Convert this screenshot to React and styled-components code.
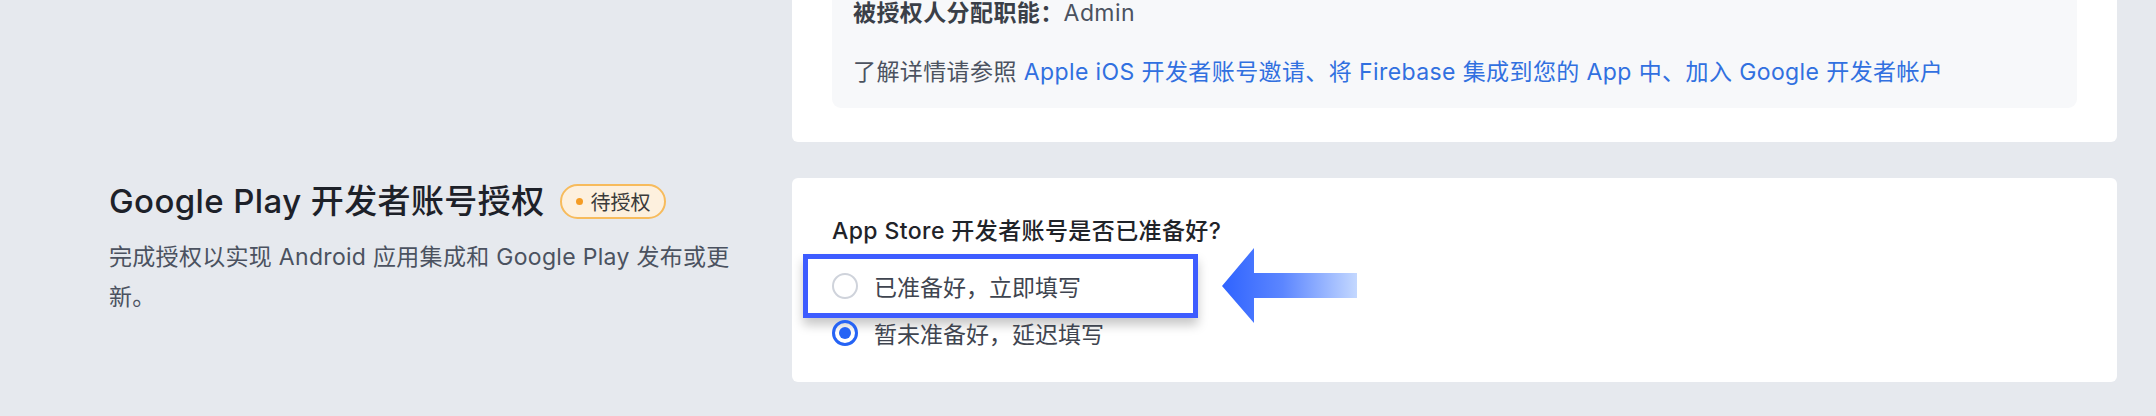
import React from "react";
import styled, { createGlobalStyle } from "styled-components";

const GlobalStyle = createGlobalStyle`
  html, body {
    margin: 0;
    padding: 0;
    background: #e6e9ee;
    overflow: hidden;
  }
  body {
    font-family: Inter, "Noto Sans CJK SC", "Noto Sans", sans-serif;
    -webkit-font-smoothing: antialiased;
  }
`;

const Page = styled.div`
  width: 2156px;
  height: 416px;
  box-sizing: border-box;
  padding: 0 39px 0 109px;
  overflow: hidden;
`;

/* the view is scrolled: the first card starts above the top edge */
const Scrolled = styled.div`
  margin-top: -29px;
`;

const Row = styled.section`
  display: flex;
  align-items: flex-start;
  margin-top: ${(p) => p.$gap || 0}px;
`;

const Side = styled.div`
  width: 683px;
  flex-shrink: 0;
`;

const SideInner = styled.div`
  width: 636px;
`;

const TitleLine = styled.div`
  display: flex;
  align-items: center;
  gap: 15px;
  height: 46px;
`;

const Title = styled.h2`
  margin: 0;
  font-size: 33px;
  font-weight: 500;
  color: #1d2129;
  line-height: 46px;
  letter-spacing: 0.4px;
`;

const Badge = styled.span`
  display: inline-flex;
  align-items: center;
  gap: 8px;
  height: 35px;
  box-sizing: border-box;
  padding: 0 13px 0 14px;
  border: 2px solid #f7bb5c;
  border-radius: 18px;
  background: #fdf0de;
  font-size: 20px;
  color: #3a3a3a;
  &::before {
    content: "";
    width: 7px;
    height: 7px;
    border-radius: 50%;
    background: #f59c24;
  }
`;

const Desc = styled.p`
  margin: 13px 0 0;
  font-size: 23px;
  line-height: 40px;
  letter-spacing: 0.3px;
  color: #4b5260;
`;

const Card = styled.div`
  flex: 1;
  background: #fff;
  border-radius: ${(p) => (p.$flatTop ? "0 0 6px 6px" : "6px")};
  padding: ${(p) => p.$pad};
  box-sizing: border-box;
`;

const InfoBox = styled.div`
  background: #f7f8fa;
  border-radius: 0 0 9px 9px;
  padding: 22px 21px 16px;
  font-size: 23px;
  line-height: 40px;
  letter-spacing: 0.4px;
  color: #4b5260;
`;

const InfoLine = styled.div`
  margin-top: ${(p) => p.$mt || 0}px;
`;

const Label = styled.span`
  font-weight: 600;
  color: #3a3f48;
`;

const Link = styled.a`
  color: #3170e0;
  text-decoration: none;
`;

const Question = styled.div`
  font-size: 23px;
  line-height: 36px;
  font-weight: 500;
  letter-spacing: 0.4px;
  color: #1f2329;
`;

const Options = styled.div`
  display: flex;
  flex-direction: column;
  gap: 7px;
  margin-top: 17px;
`;

const Option = styled.label`
  position: relative;
  display: flex;
  align-items: center;
  gap: 16px;
  height: 40px;
  font-size: 23px;
  color: #3f4550;
  cursor: pointer;
`;

const Radio = styled.span`
  width: 26px;
  height: 26px;
  box-sizing: border-box;
  border-radius: 50%;
  border: ${(p) => (p.$checked ? "3px solid #2563f5" : "2px solid #cfd3db")};
  display: flex;
  align-items: center;
  justify-content: center;
  &::after {
    content: "";
    display: ${(p) => (p.$checked ? "block" : "none")};
    width: 12px;
    height: 12px;
    border-radius: 50%;
    background: #2563f5;
  }
`;

const Highlight = styled.div`
  position: absolute;
  left: -29px;
  top: -12px;
  width: 395px;
  height: 64px;
  box-sizing: border-box;
  border: 5px solid #3d5cff;
  box-shadow: 0 7px 10px rgba(0, 0, 0, 0.22);
  pointer-events: none;
`;

const Pointer = styled.svg`
  position: absolute;
  left: 390px;
  top: -18px;
  width: 135px;
  height: 75px;
`;

function Arrow() {
  return (
    <Pointer viewBox="0 0 135 75">
      <defs>
        <linearGradient id="arrowFill" x1="0" y1="0" x2="1" y2="0">
          <stop offset="0" stopColor="#2f63ff" />
          <stop offset="0.45" stopColor="#5c86ff" />
          <stop offset="1" stopColor="#c4d8ff" />
        </linearGradient>
      </defs>
      <path
        d="M0 38 L32 0 L32 25 L135 25 L135 50 L32 50 L32 75 Z"
        fill="url(#arrowFill)"
      />
    </Pointer>
  );
}

export default function App() {
  return (
    <>
      <GlobalStyle />
      <Page>
        <Scrolled>
          <Row>
            <Side />
            <Card $flatTop $pad="0 40px 34px">
              <InfoBox>
                <InfoLine>
                  <Label>被授权人分配职能：</Label>Admin
                </InfoLine>
                <InfoLine $mt={19}>
                  了解详情请参照{" "}
                  <Link>Apple iOS 开发者账号邀请</Link>
                  <Link>、</Link>
                  <Link>将 Firebase 集成到您的 App 中</Link>
                  <Link>、</Link>
                  <Link>加入 Google 开发者帐户</Link>
                </InfoLine>
              </InfoBox>
            </Card>
          </Row>

          <Row $gap={36}>
            <Side>
              <SideInner>
                <TitleLine>
                  <Title>Google Play 开发者账号授权</Title>
                  <Badge>待授权</Badge>
                </TitleLine>
                <Desc>
                  完成授权以实现 Android 应用集成和 Google Play 发布或更新。
                </Desc>
              </SideInner>
            </Side>
            <Card $pad="35px 40px 29px">
              <Question>App Store 开发者账号是否已准备好?</Question>
              <Options>
                <Option>
                  <Radio />
                  已准备好，立即填写
                  <Highlight />
                  <Arrow />
                </Option>
                <Option>
                  <Radio $checked />
                  暂未准备好，延迟填写
                </Option>
              </Options>
            </Card>
          </Row>
        </Scrolled>
      </Page>
    </>
  );
}
